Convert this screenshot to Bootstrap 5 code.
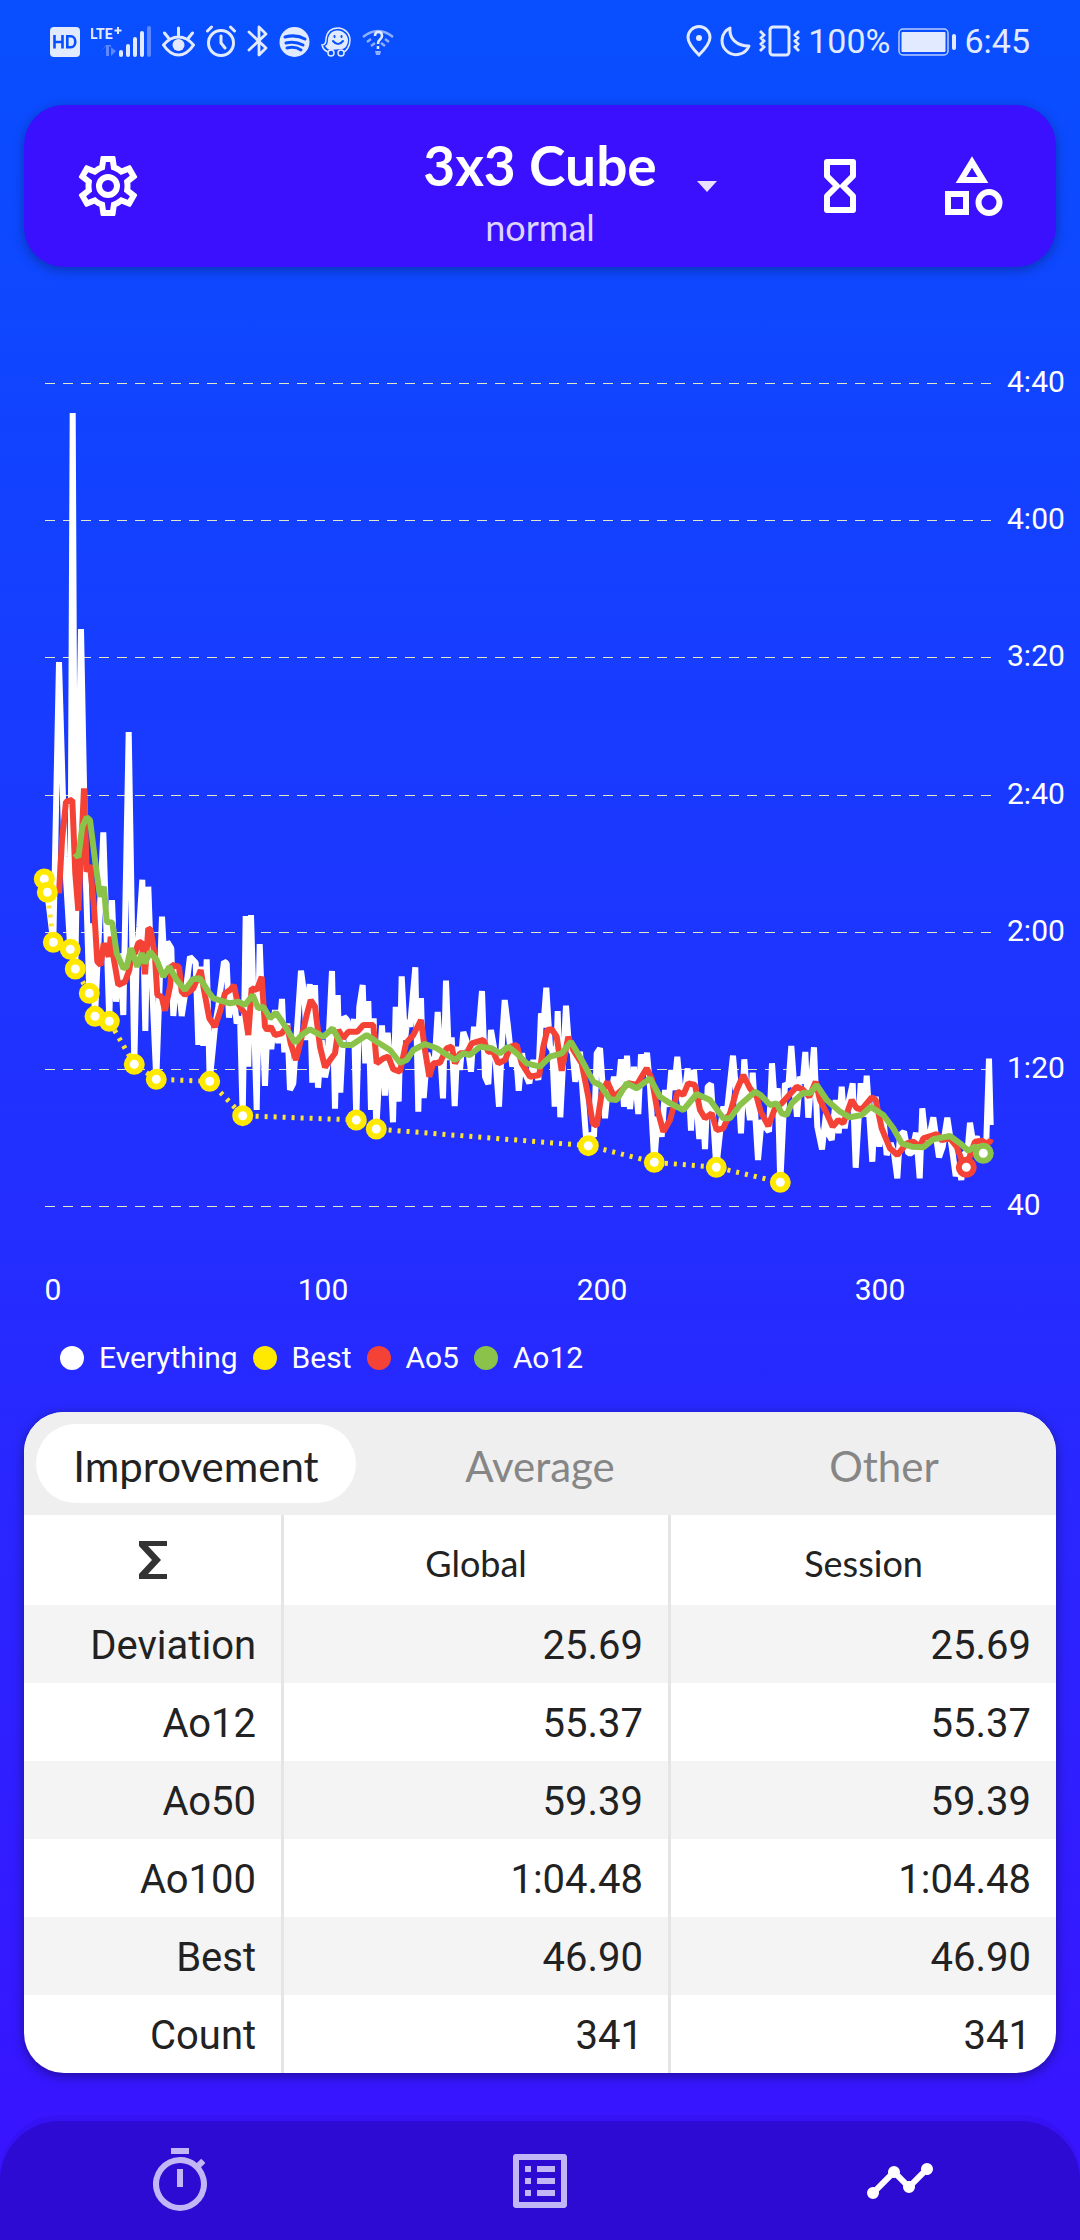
<!DOCTYPE html>
<html lang="en">
<head>
<meta charset="utf-8">
<meta name="viewport" content="width=device-width, initial-scale=1">
<title>Cube timer – statistics</title>
<link href="https://cdn.jsdelivr.net/npm/bootstrap@5.3.0/dist/css/bootstrap.min.css" rel="stylesheet">
<style>
  body { font-family: Roboto, sans-serif; background: linear-gradient(#084fff, #3a12ff); color: #fff; }
  svg { display: block; flex: none; }
  .round-font { font-family: Lato, "Open Sans", sans-serif; }
  .status-bar { height: 81px; padding: 0 50px; color: #e2eaff; font-size: 34px; line-height: 40px; }
  .status-group { gap: 11px; }
  .status-group.tight { gap: 8px; }
  .app-header { margin: 24px 24px 0; height: 162px; padding: 0 48px; border-radius: 40px; background: #3a10ff; box-shadow: 0 3px 12px rgba(0,0,0,.3); display: grid; grid-template-columns: 1fr auto 1fr; align-items: center; }
  .puzzle-btn { display: grid; grid-template-columns: 60px auto 60px; align-items: center; padding: 0; border: 0; background: none; color: #fff; text-align: center; }
  .puzzle-text { padding-top: 12px; }
  .puzzle-title { font-size: 55px; line-height: 60px; font-weight: 700; }
  .puzzle-sub { font-size: 36px; line-height: 44px; margin-top: 10px; color: #ddd5ff; }
  .icon-btn { padding: 0; border: 0; background: none; color: #fff; }
  .header-tools { gap: 60px; }
  .legend-row { padding: 0 60px; gap: 15px; font-size: 30px; line-height: 36px; margin: 17px 0 36px; }
  .legend-row span { display: flex; align-items: center; gap: 15px; }
  .legend-row i { width: 24px; height: 24px; border-radius: 50%; }
  .stats-card { margin: 0 24px 48px; border-radius: 40px; overflow: hidden; background: #fff; color: #222; box-shadow: 0 3px 12px rgba(0,0,0,.4); }
  .stats-tabs { background: #efefef; height: 103px; }
  .stats-tabs button { height: 79px; margin: 12px; border: 0; border-radius: 40px; background: none; color: #868686; font-size: 42px; padding: 6px 0 0; }
  .stats-tabs button.active { background: #fff; color: #222; }
  .stats-table { width: 100%; table-layout: fixed; border-collapse: separate; border-spacing: 0; font-size: 40px; line-height: 46px; }
  .stats-table tr > * { height: 78px; padding: 4px 25px 0; text-align: right; font-weight: 400; border: 0 solid #e5e5e5; border-right-width: 3px; }
  .stats-table tr > :last-child { border-right-width: 0; }
  .stats-table thead tr > * { height: 90px; text-align: center; font-size: 36px; padding: 6px 0 0; }
  .stats-table thead tr > :first-child { padding: 0; }
  .stats-table tbody tr:nth-child(odd) { background: #f4f4f4; }
  .bottom-nav { height: 120px; background: #2d0bd2; border-radius: 60px 60px 0 0; box-shadow: 0 -6px 0 rgba(45,11,210,.25); }
  .bottom-nav a { color: #c2b6f6; }
  .bottom-nav a.active { color: #fff; }
</style>
</head>
<body>
<div class="status-bar d-flex align-items-center justify-content-between">
  <div class="status-group d-flex align-items-center">
    <svg width="30" height="32" viewBox="0 0 30 32"><rect y="2" width="30" height="30" rx="4" fill="#e2eaff"/><g fill="none" stroke="#084fff" stroke-width="2.6"><path d="M4.500 10v13.500M12.500 10v13.500M4.500 17h8M17.300 11.300h3.500c6 0 6 11 0 11h-3.500z"/></g></svg>
    <svg width="60" height="32" viewBox="0 0 60 32" fill="#e2eaff"><text x="-1" y="14" font-size="14" font-weight="700">LTE</text><path d="M26 2h2v2.500h2.500v2H28V9h-2V6.500h-2.500v-2H26z"/><g fill="#5d88ff"><path d="M10 26l5-5v10h3V20h-3M25 26l-5 5V20h-3"/><rect x="56" y="1" width="4" height="31" rx="2"/></g><rect x="28" y="25" width="4" height="7" rx="2"/><rect x="35" y="19" width="4" height="13" rx="2"/><rect x="42" y="12" width="4" height="20" rx="2"/><rect x="49" y="6" width="4" height="26" rx="2"/></svg>
    <svg width="33" height="32" viewBox="0 0 33 32" fill="none" stroke="#e2eaff" stroke-width="3" stroke-linecap="round"><path d="M1.500 20Q8 12 16.500 12T31.500 20Q25 30 16.500 30T1.500 20zM16.500 3v7M2.500 8l4 5M30.500 8l-4 5"/><circle cx="16.500" cy="20" r="6" fill="#e2eaff" stroke="none"/></svg>
    <svg width="30" height="32" viewBox="0 0 30 32" fill="none" stroke="#e2eaff" stroke-width="3" stroke-linecap="round"><circle cx="15" cy="18" r="12.500"/><path d="M15 11v7l4 5M1.500 6l4-4M28.500 6l-4-4"/></svg>
    <svg width="21" height="32" viewBox="0 0 21 32" fill="none" stroke="#e2eaff" stroke-width="2.800" stroke-linecap="round" stroke-linejoin="round"><path d="M2 7l17 16-7 7V2l7 7L2 25"/></svg>
    <svg width="31" height="32" viewBox="0 0 31 32"><circle cx="15.500" cy="17" r="15" fill="#e2eaff"/><g fill="none" stroke="#084fff" stroke-width="3" stroke-linecap="round"><path d="M6 12q11-3 20 2M7 18q9-2 17 2M8 23q8-2 14 2"/></g></svg>
    <svg width="30" height="32" viewBox="0 0 30 32" fill="none" stroke="#e2eaff" stroke-width="1.500"><path d="M7 27q-5-2-6-7q4 0 4-6C6 6 11 3 17 3s12 5 12 12-4 11-6 12"/><path d="M9 25q-3-1-5-4q3-1 3-7C8 8 12 5.500 17 5.500S27 10 27 15s-3 9-6 9z" fill="#e2eaff" stroke="none"/><g fill="#084fff" stroke="#e2eaff"><circle cx="10" cy="28" r="3"/><circle cx="20" cy="28" r="3"/></g><g stroke="#084fff" stroke-width="2" stroke-linecap="round"><path d="M12 16q5 6 10 0M13.500 11v1M20.500 11v1"/></g></svg>
    <svg width="32" height="32" viewBox="0 0 32 32" fill="none" stroke="#8fb0ff" stroke-width="2.400"><path d="M1 12Q16 0 31 12"/><path d="M5 17l4-3M27 17l-4-3M9 21l4-3M23 21l-4-3"/><path d="M13 11q0-4 3.500-4t3.500 4q0 2-2 3.500t-2 4.500M16 21v3" stroke="#e2eaff" stroke-width="2.600"/><path d="M13 26h6l-1 4h-4z" fill="#8fb0ff" stroke="none"/></svg>
  </div>
  <div class="status-group tight d-flex align-items-center">
    <svg width="26" height="32" viewBox="0 0 26 32" fill="none" stroke="#e2eaff" stroke-width="3"><path d="M13 30C6 23 2 18 2 12.500a11 11 0 0 1 22 0C24 18 20 23 13 30z"/><circle cx="13" cy="13" r="3" fill="#e2eaff" stroke="none"/></svg>
    <svg width="31" height="32" viewBox="0 0 31 32" fill="none" stroke="#e2eaff" stroke-width="3" stroke-linejoin="round"><path d="M10 3c-1 11 7 18 19 18A14 14 0 1 1 10 3z"/></svg>
    <svg width="41" height="32" viewBox="0 0 41 32" fill="none" stroke="#e2eaff" stroke-width="3"><rect x="11" y="2" width="19" height="28" rx="3"/><path d="M1 6l4 4-3 3 3 3-3 3 3 3-4 4M40 6l-4 4 3 3-3 3 3 3-3 3 4 4" stroke-width="2.800"/></svg>
    <span>100%</span>
    <svg width="58" height="32" viewBox="0 0 58 32"><rect x="1" y="4" width="49" height="26" rx="4" fill="none" stroke="#b9ccff" stroke-width="1.500"/><rect x="3.500" y="7" width="44" height="20" rx="1" fill="#e2eaff"/><rect x="54" y="9" width="4" height="16" rx="2" fill="#e2eaff"/></svg>
    <span>6:45</span>
  </div>
</div>

<header class="app-header">
  <div class="d-flex">
    <button class="icon-btn" aria-label="Settings"><svg width="72" height="72" viewBox="0 0 24 24" fill="currentColor"><path d="M19.430 12.980c.04-.32.07-.64.07-.98s-.03-.66-.07-.98l2.110-1.650c.19-.15.24-.42.12-.64l-2-3.460a.5.500 0 0 0-.61-.22l-2.490 1a7.300 7.300 0 0 0-1.690-.98l-.38-2.650A.49.490 0 0 0 14 2h-4c-.25 0-.46.18-.49.420l-.38 2.650c-.61.25-1.170.59-1.690.98l-2.490-1a.57.570 0 0 0-.18-.03.500.500 0 0 0-.43.250l-2 3.460c-.13.22-.07.49.12.640l2.110 1.650c-.04.32-.07.65-.07.980s.03.660.07.980l-2.110 1.650c-.19.15-.24.42-.12.640l2 3.460c.12.220.39.300.61.220l2.490-1c.52.400 1.080.730 1.690.980l.38 2.650c.03.240.24.420.49.420h4c.25 0 .46-.18.490-.42l.38-2.650c.61-.25 1.170-.59 1.690-.98l2.490 1c.23.080.49 0 .61-.22l2-3.460c.12-.22.07-.49-.12-.64zm-1.980-1.710c.04.310.05.520.05.730s-.02.430-.05.730l-.14 1.130.89.700 1.080.840-.7 1.210-1.270-.51-1.040-.42-.9.680c-.43.320-.84.560-1.250.730l-1.060.43-.16 1.130-.2 1.350h-1.400l-.35-2.480-1.060-.43c-.43-.18-.83-.41-1.230-.71l-.91-.7-1.060.430-1.270.510-.7-1.210 1.080-.840.890-.7-.14-1.130c-.03-.31-.05-.54-.05-.74s.02-.43.050-.73l.14-1.130-.89-.7-1.080-.84.700-1.210 1.270.51 1.040.420.900-.68c.43-.32.840-.56 1.250-.73l1.060-.43.160-1.130.2-1.350h1.390l.35 2.480 1.060.43c.43.180.830.410 1.230.710l.91.700 1.060-.43 1.270-.51.700 1.210-1.070.850-.89.700zM12 8a4 4 0 1 0 0 8 4 4 0 0 0 0-8zm0 6a2 2 0 1 1 0-4 2 2 0 0 1 0 4z"/></svg></button>
  </div>
  <button class="puzzle-btn round-font" aria-haspopup="true">
    <span></span>
    <span class="puzzle-text"><span class="puzzle-title d-block">3x3 Cube</span><span class="puzzle-sub d-block">normal</span></span>
    <svg class="ms-auto" width="20" height="12" viewBox="0 0 20 12"><path d="M0 1h20L10 12z" fill="#e8e1ff"/></svg>
  </button>
  <div class="header-tools d-flex justify-content-end">
    <button class="icon-btn" aria-label="Inspection"><svg width="72" height="72" viewBox="0 0 72 72" fill="none" stroke="currentColor" stroke-width="6" stroke-linejoin="round"><path d="M23 12h26v14L39 36l10 10v14H23V46l10-10-10-10z"/></svg></button>
    <button class="icon-btn" aria-label="Puzzle type"><svg width="72" height="72" viewBox="0 0 72 72" fill="none" stroke="currentColor" stroke-width="6"><path d="M36 12L25 30h22z"/><rect x="12" y="44" width="18" height="18"/><circle cx="53" cy="52.500" r="10.500"/></svg></button>
  </div>
</header>

<main>
  <svg id="chart" class="w-100 h-auto" viewBox="0 267 1080 1056" role="img" aria-label="Solve times">
    <g id="grid" stroke="#e2e6c8" stroke-width="1" stroke-dasharray="10 8"></g>
    <g id="labels" fill="#fff" font-size="30"></g>
    <g id="lines" fill="none" stroke-linejoin="bevel"></g>
    <g id="marks" fill="#fff" stroke-width="6"></g>
  </svg>
  <div class="legend-row d-flex">
    <span><i class="bg-white"></i>Everything</span>
    <span><i style="background:#ffe900"></i>Best</span>
    <span><i style="background:#f44336"></i>Ao5</span>
    <span><i style="background:#8bc34a"></i>Ao12</span>
  </div>

  <section class="stats-card">
    <div class="stats-tabs row g-0 round-font" role="tablist">
      <div class="col d-flex"><button class="flex-fill active" role="tab" aria-selected="true">Improvement</button></div>
      <div class="col d-flex"><button class="flex-fill" role="tab">Average</button></div>
      <div class="col d-flex"><button class="flex-fill" role="tab">Other</button></div>
    </div>
    <table class="stats-table">
      <colgroup><col style="width:25.200%"><col style="width:37.500%"><col></colgroup>
      <thead class="round-font"><tr>
        <th scope="col" aria-label="Statistic"><svg class="mx-auto" width="30" height="38" viewBox="0 0 30 38"><path d="M1 0h28v5H10l13 14L10 33h19v5H1v-5l13-14L1 5z" fill="#333"/></svg></th>
        <th scope="col">Global</th><th scope="col">Session</th></tr></thead>
      <tbody>
        <tr><th scope="row">Deviation</th><td>25.69</td><td>25.69</td></tr>
        <tr><th scope="row">Ao12</th><td>55.37</td><td>55.37</td></tr>
        <tr><th scope="row">Ao50</th><td>59.39</td><td>59.39</td></tr>
        <tr><th scope="row">Ao100</th><td>1:04.48</td><td>1:04.48</td></tr>
        <tr><th scope="row">Best</th><td>46.90</td><td>46.90</td></tr>
        <tr><th scope="row">Count</th><td>341</td><td>341</td></tr>
      </tbody>
    </table>
  </section>
</main>

<nav class="bottom-nav row g-0 align-items-center" aria-label="Sections">
  <a class="col d-flex justify-content-center" href="#timer" aria-label="Timer"><svg width="72" height="72" viewBox="0 0 24 24" fill="currentColor"><path d="M15 1H9v2h6zm-4 13h2V8h-2zm8.030-6.610l1.420-1.420c-.43-.51-.9-.99-1.410-1.410l-1.420 1.420A8.960 8.960 0 0 0 12 4a9 9 0 1 0 7.030 3.390zM12 20a7 7 0 1 1 0-14 7 7 0 0 1 0 14z"/></svg></a>
  <a class="col d-flex justify-content-center" href="#list" aria-label="Solves"><svg width="72" height="72" viewBox="0 0 24 24" fill="currentColor"><path d="M19 5v14H5V5zm1.100-2H3.900c-.5 0-.9.400-.9.900v16.200c0 .4.400.9.900.9h16.200c.4 0 .9-.5.900-.9V3.900c0-.5-.5-.9-.9-.9zM11 7h6v2h-6zm0 4h6v2h-6zm0 4h6v2h-6zM7 7h2v2H7zm0 4h2v2H7zm0 4h2v2H7z"/></svg></a>
  <a class="col d-flex justify-content-center active" href="#stats" aria-label="Statistics" aria-current="page"><svg width="72" height="72" viewBox="0 0 24 24" fill="currentColor"><path d="M23 8c0 1.100-.9 2-2 2a1.700 1.700 0 0 1-.51-.07l-3.560 3.550c.05.160.07.340.07.520a2 2 0 1 1-4 0c0-.18.020-.36.070-.52l-2.550-2.550c-.16.050-.34.070-.52.070s-.36-.02-.52-.07l-4.550 4.560c.05.160.07.330.07.510a2 2 0 1 1-2-2c.18 0 .35.020.51.070l4.560-4.550A1.700 1.700 0 0 1 8 9a2 2 0 1 1 4 0c0 .18-.02.360-.07.520l2.550 2.550c.16-.05.340-.07.520-.07s.36.020.52.070l3.550-3.560A1.700 1.700 0 0 1 19 8a2 2 0 1 1 4 0z"/></svg></a>
</nav>

<script src="https://cdn.jsdelivr.net/npm/bootstrap@5.3.0/dist/js/bootstrap.bundle.min.js"></script>
<script>
// Each series is stored in four blocks; a block's points are thirds of a unit from its origin.
const origins = [[30,740],[270,880],[510,940],[760,1020]];
const series = {
  everything: [
    '43,417 52,457 70,607 87,-234 104,350 121,628 128,-981 136,687 153,-333 167,400 178,760 185,550 195,829 205,620 220,277 238,844 246,480 258,785 270,640 280,825 296,-24 313,973 320,640 328,560 337,419 346,873 355,440 362,640 379,1018 396,530 405,700 412,605 424,625 430,828 442,680 455,828 470,730 480,650 497,668 505,915 514,680 520,918 530,658 539,1024 555,860 565,800 582,665 590,670 597,833 608,740 620,850 630,830 638,1127 647,528 655,980 663,525 680,1110 689,612 705,1038 714,820 724,928',
    '15,390 25,490 36,357 43,517 52,430 60,630 70,610 93,272 103,345 110,480 119,312 127,608 135,315 144,623 155,480 165,592 172,560 186,273 195,686 203,345 211,638 222,410 232,420 240,500 252,417 259,720 268,380 278,315 286,550 295,363 303,690 311,415 319,747 336,436 345,647 353,458 361,560 369,727 377,380 386,665 395,289 405,480 412,420 420,440 436,262 445,695 453,354 461,654 472,520 485,560 495,530 503,396 519,655 528,302 537,540 545,472 554,678 562,500 570,570 580,456 592,490 603,575 612,440 622,500 636,333 645,590 655,612 663,450 675,520 687,680 695,500 704,360 714,440 727,560 737,510',
    '26,452 36,340 45,400 58,430 70,360 85,420 93,220 100,262 109,143 120,320 127,330 134,500 143,213 151,532 168,197 177,320 188,340 196,425 210,335 218,460 228,590 235,617 243,580 252,590 260,340 270,325 285,535 295,430 302,470 312,410 322,470 333,358 342,500 351,347 360,507 372,380 385,522 393,343 402,400 411,338 420,440 433,667 443,530 455,590 465,450 475,500 484,390 492,450 502,350 512,460 520,500 533,385 543,572 552,390 568,597 577,480 585,627 593,440 603,432 619,682 632,560 640,500 650,520 669,347 678,450 685,440 693,580 703,358 712,480 720,540 728,398 744,660',
    '5,300 15,320 27,335 36,130 45,260 53,205 61,487 75,190 85,200 94,78 103,200 111,290 120,170 128,190 136,96 145,293 162,82 172,320 186,388 198,280 205,340 215,360 227,240 236,340 245,200 254,325 265,250 278,190 287,443 302,190 312,290 320,167 337,425 347,230 358,380 370,290 380,405 392,370 402,400 412,475 420,345 432,335 445,400 455,400 468,338 479,475 487,265 497,360 508,350 520,292 537,412 548,380 562,293 575,380 587,468 597,440 604,480 612,400 622,400 630,308 640,370 650,350 665,400 678,390 687,116 692,315'],
  ao5: [
    '87,460 96,300 108,185 127,180 136,400 145,512 162,145 170,395 180,375 192,500 202,665 212,675 221,610 236,650 242,590 252,660 265,735 285,725 298,690 305,640 315,640 325,610 335,605 345,703 355,565 362,570 375,650 382,765 395,770 405,812 420,740 426,675 447,680 455,755 465,765 490,745 512,690 522,750 538,835 555,860 570,815 585,760 600,750 612,735 622,785 635,808 645,820 655,885 665,745 680,750 695,710 705,860 712,870',
    '2,440 15,465 35,460 52,438 62,490 78,540 95,470 110,405 122,360 135,380 150,500 165,562 180,540 195,520 205,450 220,475 235,455 262,455 280,435 310,435 320,550 340,535 355,530 370,568 390,575 408,490 430,465 453,420 465,510 478,590 490,550 510,548 530,505 545,500 555,550 570,520 590,520 605,490 640,480 655,515 670,515 685,550 705,540',
    '2,320 20,315 35,370 60,410 88,405 100,320 112,270 125,268 140,290 155,392 175,290 190,330 215,370 235,470 248,550 260,557 275,460 292,425 312,470 335,450 355,430 380,435 410,385 425,415 440,500 460,575 480,540 503,455 520,465 535,430 555,435 570,510 585,535 605,520 620,570 640,565 660,520 680,450 700,405 720,445 740,470',
    '2,275 25,318 45,265 65,250 110,200 130,210 148,230 167,185 180,240 200,280 218,320 235,300 250,310 275,240 290,265 305,268 335,232 347,240 365,325 390,385 412,405 440,370 460,365 480,380 490,355 530,342 545,360 570,355 590,380 605,420 619,442 632,400 645,365 665,362 680,370 690,365 692,357'],
  ao12: [
    '135,340 145,352 157,260 170,232 180,240 195,360 210,470 222,440 230,545 247,548 260,640 280,685 290,680 303,625 322,680 335,640 345,670 360,635 380,660 400,710 418,680 440,720 465,750 488,718 510,715 535,755 550,775 600,790 625,785 645,795 668,765 685,805 700,800 720,835',
    '18,398 40,430 75,488 95,465 120,448 160,470 188,445 215,495 245,495 290,465 320,485 360,510 390,548 410,540 430,510 465,492 500,505 555,540 580,520 600,525 630,500 665,505 690,520 715,500',
    '20,340 50,370 90,380 120,350 155,340 183,305 215,360 250,425 270,435 300,478 320,480 350,430 380,445 420,415 450,470 480,490 520,510 560,462 600,480 640,535 660,535 690,495 735,455',
    '2,225 30,255 50,250 65,280 80,285 95,250 130,218 150,220 170,195 200,240 240,275 270,292 305,285 332,260 370,285 400,325 425,370 455,380 490,382 520,358 570,348 600,370 625,392 645,380 670,400'],
  best: [
    '43,417 52,457 70,607 121,628 136,687 178,760 195,829 238,844 313,973 379,1018 539,1024 638,1127',
    '259,720 319,747', '235,617 433,667 619,682', '61,487']
};
const points = s => s.flatMap((block, i) => block.split(' ').map(p => {
  const [x, y] = p.split(',').map(Number);
  return [+(origins[i][0] + x / 3).toFixed(1), +(origins[i][1] + y / 3).toFixed(1)];
}));
const add = (parent, name, attrs, text) => {
  const el = document.createElementNS('http://www.w3.org/2000/svg', name);
  for (const k in attrs) el.setAttribute(k, attrs[k]);
  if (text) el.textContent = text;
  document.getElementById(parent).append(el);
};
['4:40','4:00','3:20','2:40','2:00','1:20','40'].forEach((t, i) => {
  const y = 383 + Math.round(i * 137.2);
  add('grid', 'path', { d: `M45 ${y}.5H991` });
  add('labels', 'text', { x: 1007, y: y + 9 }, t);
});
[['0',53],['100',323],['200',602],['300',880]].forEach(([t, x]) => add('labels', 'text', { x, y: 1300, 'text-anchor': 'middle' }, t));
const line = (key, color, width, dash) => add('lines', 'polyline', { points: points(series[key]).join(' '), stroke: color, 'stroke-width': width, 'stroke-dasharray': dash || 'none' });
line('everything', '#fff', 6);
line('best', '#ffe62e', 5, '3 6');
line('ao5', '#f44336', 6);
line('ao12', '#8bc34a', 6);
const mark = (p, color) => add('marks', 'circle', { cx: p[0], cy: p[1], r: 7.5, stroke: color });
points(series.best).forEach(p => mark(p, '#ffe900'));
mark([966.3, 1167.3], '#f44336');
mark([983.3, 1153.3], '#8bc34a');
</script>
</body>
</html>
